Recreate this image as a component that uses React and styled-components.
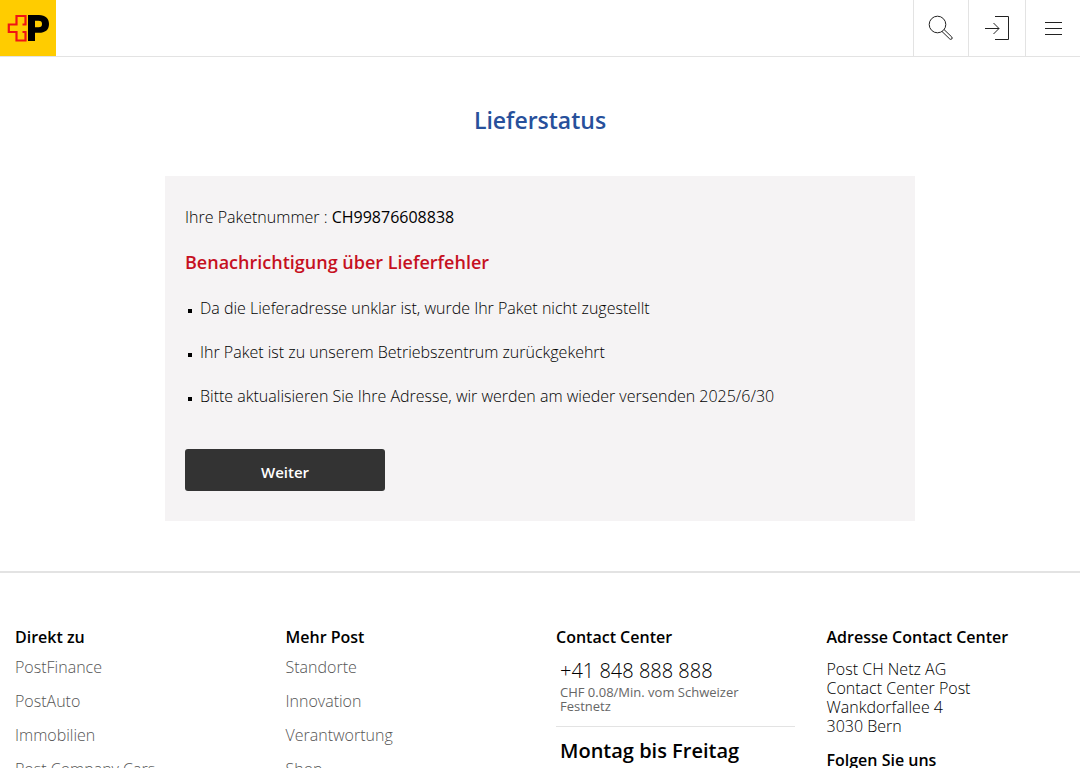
import styled, { createGlobalStyle } from 'styled-components'

const GlobalStyle = createGlobalStyle`
    *, *::before, *::after {
        box-sizing: border-box;
    }

    body {
        margin: 0;
        background: #fff;
        color: #000;
        font-family: "Open Sans", "Noto Sans", sans-serif;
        font-size: 16px;
        font-weight: 400;
        line-height: 20px;
    }

    h1, h2, h3, p, ul {
        margin: 0;
        padding: 0;
    }

    a {
        text-decoration: none;
    }
`;

const Header = styled.header`
    display: flex;
    justify-content: space-between;
    height: 57px;
    border-bottom: 1px solid #e3e3e3;
`;

const Logo = styled.a`
    display: block;
    width: 56px;
    height: 56px;

    svg {
        display: block;
    }
`;

const Tools = styled.nav`
    display: flex;
`;

const ToolButton = styled.button`
    display: flex;
    align-items: center;
    justify-content: center;
    width: ${props => props.$wide ? '57px' : '55px'};
    padding: 0;
    border: 0;
    border-left: 1px solid #e3e3e3;
    background: #fff;
    cursor: pointer;

    svg {
        fill: none;
        stroke: #222;
    }
`;

const Main = styled.main`
    max-width: 780px;
    margin: 0 auto;
    padding: 43px 15px 50px;
`;

const Title = styled.h1`
    color: #27509b;
    font-size: 23px;
    font-weight: 600;
    line-height: 40px;
    text-align: center;
`;

const Panel = styled.section`
    margin-top: 36px;
    padding: 31px 20px 30px;
    background: #f5f3f4;
`;

const Alert = styled.h2`
    margin: 23px 0 24px;
    color: #c6101f;
    font-size: 18px;
    font-weight: 600;
    line-height: 24px;
`;

const Parcel = styled.p`
    font-weight: 300;

    b {
        font-weight: 500;
    }
`;

const Reasons = styled.ul`
    list-style: none;
    font-weight: 300;

    li {
        display: flex;
        align-items: center;
        gap: 8px;
        padding: 0 0 24px 3px;
    }

    li::before {
        content: "";
        width: 4px;
        height: 4px;
        margin-top: 6px;
        background: #000;
    }
`;

const NextButton = styled.button`
    display: block;
    width: 200px;
    height: 42px;
    margin-top: 19px;
    padding: 4px 0 0;
    border: 0;
    border-radius: 3px;
    background: #333;
    color: #fff;
    font: 600 15px/20px "Open Sans", "Noto Sans", sans-serif;
    cursor: pointer;
`;

const Footer = styled.footer`
    display: grid;
    grid-template-columns: repeat(4, 1fr);
    column-gap: 32px;
    padding: 54px 15px 40px;
    border-top: 2px solid #e3e3e3;
`;

const FooterTitle = styled.h3`
    color: #000;
    font-size: 16px;
    font-weight: 600;
    line-height: 20px;
`;

const Links = styled.ul`
    margin-top: 10px;
    list-style: none;

    li {
        padding-bottom: 14px;
    }

    a {
        color: #555;
        font-weight: 300;
    }
`;

const Phone = styled.div`
    margin-top: 12px;
    padding: 0 4px 13px;
    border-bottom: 1px solid #e3e3e3;

    a {
        display: block;
        color: #000;
        font-size: 20px;
        font-weight: 300;
        line-height: 24px;
    }

    small {
        display: block;
        margin-top: 2px;
        color: #666;
        font-size: 13px;
        line-height: 14px;
    }
`;

const Hours = styled.p`
    padding: 11px 4px 0;
    font-size: 20px;
    font-weight: 600;
    line-height: 26px;
`;

const Address = styled.address`
    margin: 13px 0 14px;
    font-style: normal;
    font-weight: 300;
    line-height: 19px;
`;

const columns = [
    { title: 'Direkt zu', links: ['PostFinance', 'PostAuto', 'Immobilien', 'Post Company Cars'] },
    { title: 'Mehr Post', links: ['Standorte', 'Innovation', 'Verantwortung', 'Shop'] },
];

const reasons = [
    'Da die Lieferadresse unklar ist, wurde Ihr Paket nicht zugestellt',
    'Ihr Paket ist zu unserem Betriebszentrum zurückgekehrt',
    'Bitte aktualisieren Sie Ihre Adresse, wir werden am wieder versenden 2025/6/30',
];

export default () => {
    return (
        <>
            <GlobalStyle />
            <Header>
                <Logo href="#" aria-label="Post">
                    <svg width="56" height="56" viewBox="0 0 56 56">
                        <rect width="56" height="56" fill="#fc0" />
                        <path d="M25.500 25V16H16.500V24.500H8.800V32H16.500V40.500H25.500V31.500M26.500 24.500H22.500M26.500 32H22.500" fill="none" stroke="#f01414" strokeWidth="2.200" />
                        <path fillRule="evenodd" d="M28 15H39C45.500 15 49 18.500 49 24C49 30 45 32.800 39 32.800H35V41H28ZM35 20.800V27.200H38.500C41 27.200 42 26.200 42 24C42 21.800 41 20.800 38.500 20.800Z" fill="#000" />
                    </svg>
                </Logo>
                <Tools>
                    <ToolButton type="button" aria-label="Suche">
                        <svg width="26" height="26" viewBox="0 0 26 26">
                            <circle cx="9.500" cy="9.500" r="8.300" />
                            <path d="M14 16.500L21.800 24Q22.800 24.800 23.800 24Q24.600 23 23.800 22L16 14.500" />
                        </svg>
                    </ToolButton>
                    <ToolButton type="button" aria-label="Login" $wide>
                        <svg width="26" height="26" viewBox="0 0 26 26">
                            <path d="M11 1.500H24.500V24.500H11M1 13.500H15M9.500 8L15 13.500L9.500 19" />
                        </svg>
                    </ToolButton>
                    <ToolButton type="button" aria-label="Menu">
                        <svg width="17" height="14" viewBox="0 0 17 14">
                            <path d="M0 1.500H17M0 7.500H17M0 13.500H17" />
                        </svg>
                    </ToolButton>
                </Tools>
            </Header>

            <Main>
                <Title>Lieferstatus</Title>
                <Panel>
                    <Parcel>Ihre Paketnummer : <b>CH99876608838</b></Parcel>
                    <Alert>Benachrichtigung über Lieferfehler</Alert>
                    <Reasons>
                        {reasons.map(reason => <li key={reason}>{reason}</li>)}
                    </Reasons>
                    <NextButton type="button">Weiter</NextButton>
                </Panel>
            </Main>

            <Footer>
                {columns.map(column => (
                    <div key={column.title}>
                        <FooterTitle>{column.title}</FooterTitle>
                        <Links>
                            {column.links.map(link => <li key={link}><a href="#">{link}</a></li>)}
                        </Links>
                    </div>
                ))}

                <div>
                    <FooterTitle>Contact Center</FooterTitle>
                    <Phone>
                        <a href="#">+41 848 888 888</a>
                        <small>CHF 0.08/Min. vom Schweizer<br />Festnetz</small>
                    </Phone>
                    <Hours>Montag bis Freitag</Hours>
                </div>

                <div>
                    <FooterTitle>Adresse Contact Center</FooterTitle>
                    <Address>
                        Post CH Netz AG<br />
                        Contact Center Post<br />
                        Wankdorfallee 4<br />
                        3030 Bern
                    </Address>
                    <FooterTitle>Folgen Sie uns</FooterTitle>
                </div>
            </Footer>
        </>
    )
}
